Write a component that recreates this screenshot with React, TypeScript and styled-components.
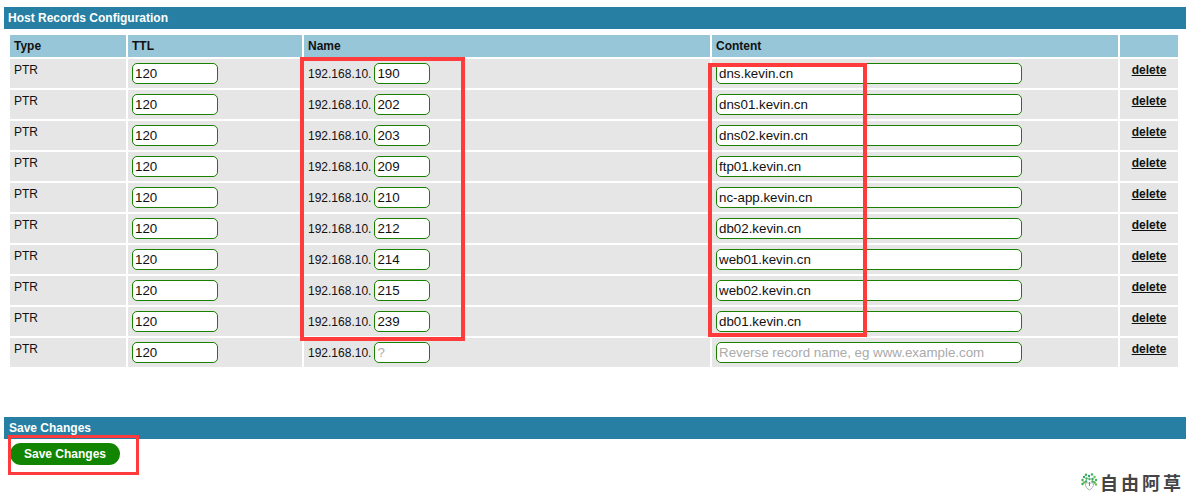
import styled, { createGlobalStyle } from "styled-components";

const GlobalStyle = createGlobalStyle`
  html, body {
    margin: 0;
    padding: 0;
    background: #fff;
    font-family: "Liberation Sans", Arial, sans-serif;
    font-size: 12px;
    color: #111;
  }
`;

const Page = styled.div`
  position: relative;
  width: 1186px;
  height: 494px;
  overflow: hidden;
  padding: 7px 0 0 4px;
  box-sizing: border-box;
`;

const SectionBar = styled.div<{ $indent: number }>`
  height: 22px;
  line-height: 22px;
  padding-left: ${(p) => p.$indent}px;
  background: #2780a3;
  color: #fff;
  font-weight: bold;
`;

const RecordsTable = styled.table`
  table-layout: fixed;
  width: 1172px;
  margin: 4px 0 48px 4px;
  border-collapse: separate;
  border-spacing: 2px;
`;

const HeadCell = styled.th`
  height: 22px;
  padding: 0 4px;
  background: #97c6d8;
  color: #111;
  font-weight: bold;
  text-align: left;
  vertical-align: middle;
`;

const Cell = styled.td`
  height: 29px;
  box-sizing: border-box;
  padding: 4px 4px 0;
  background: #e6e6e6;
  vertical-align: top;
  line-height: 14px;
`;

const FieldCell = styled(Cell)`
  white-space: nowrap;
`;

const TextInput = styled.input<{ $width: number }>`
  box-sizing: border-box;
  width: ${(p) => p.$width}px;
  height: 21px;
  margin: 0;
  padding: 1px 2px;
  border: 1px solid #1a8000;
  border-radius: 5px;
  background: #fff;
  color: #111;
  font-family: "Liberation Sans", Arial, sans-serif;
  font-size: 13.33px;
  outline: none;

  &::placeholder {
    color: #aaa;
    opacity: 1;
  }
`;

const Prefix = styled.span`
  margin-right: 3px;
`;

const DeleteCell = styled(Cell)`
  text-align: center;
`;

const DeleteLink = styled.a`
  color: #111;
  font-weight: bold;
  text-decoration: underline;
  cursor: pointer;
`;

const SaveButton = styled.button`
  display: block;
  width: 110px;
  height: 22px;
  margin: 4px 0 0 6px;
  padding: 0;
  border: 0;
  border-radius: 11px;
  background: #118400;
  color: #fff;
  font-family: "Liberation Sans", Arial, sans-serif;
  font-size: 12px;
  font-weight: bold;
`;

const RedBox = styled.div<{ $x: number; $y: number; $w: number; $h: number; $stroke: number }>`
  position: absolute;
  left: ${(p) => p.$x}px;
  top: ${(p) => p.$y}px;
  width: ${(p) => p.$w}px;
  height: ${(p) => p.$h}px;
  box-sizing: border-box;
  border: ${(p) => p.$stroke}px solid #ff3b3b;
  pointer-events: none;
`;

const Watermark = styled.div`
  position: absolute;
  right: 2px;
  bottom: 2px;
  display: flex;
  align-items: center;
  gap: 2px;
  color: #444;
  font-family: "Noto Sans CJK SC", sans-serif;
  font-size: 18px;
  font-weight: bold;
  letter-spacing: 3px;
  line-height: 20px;
`;

const records = [
  { ip: "190", host: "dns.kevin.cn" },
  { ip: "202", host: "dns01.kevin.cn" },
  { ip: "203", host: "dns02.kevin.cn" },
  { ip: "209", host: "ftp01.kevin.cn" },
  { ip: "210", host: "nc-app.kevin.cn" },
  { ip: "212", host: "db02.kevin.cn" },
  { ip: "214", host: "web01.kevin.cn" },
  { ip: "215", host: "web02.kevin.cn" },
  { ip: "239", host: "db01.kevin.cn" },
  { ip: "", host: "" },
];

const sprayDots = [
  [1.5, 7, "#3fae4f"], [3, 4, "#2fa36b"], [5, 1.8, "#3fae4f"], [8, 3, "#25a08a"],
  [11, 1.5, "#3fae4f"], [13.5, 4, "#6cc04a"], [15, 7, "#3fae4f"], [3, 9.5, "#6cc04a"],
  [5.5, 5.5, "#3fae4f"], [8.5, 6, "#3fae4f"], [11.5, 6, "#2fa36b"], [13.5, 9.5, "#3fae4f"],
  [1.5, 11, "#3fae4f"], [15, 11.5, "#6cc04a"], [5, 8.5, "#2fa36b"], [11.5, 8.5, "#3fae4f"],
] as const;

function PlantIcon() {
  return (
    <svg width="17" height="18" viewBox="0 0 17 18">
      {sprayDots.map(([cx, cy, fill], i) => (
        <circle key={i} cx={cx} cy={cy} r="1.2" fill={fill} />
      ))}
      <path
        d="M4.5 10.5c1.5-1 3-1 4 .5c1-1.500 2.500-1.500 4-.5c.5 3-2 5.500-4 6.500c-2-1-4.500-3.500-4-6.500z"
        fill="#fff"
        stroke="#a8b4b0"
        strokeWidth="1"
      />
      <path d="M8.500 9v4" stroke="#3fae4f" strokeWidth="1" fill="none" />
    </svg>
  );
}

export default function App() {
  return (
    <Page>
      <GlobalStyle />
      <SectionBar $indent={4}>Host Records Configuration</SectionBar>
      <RecordsTable>
        <colgroup>
          <col style={{ width: 116 }} />
          <col style={{ width: 174 }} />
          <col style={{ width: 406 }} />
          <col style={{ width: 406 }} />
          <col />
        </colgroup>
        <thead>
          <tr>
            <HeadCell>Type</HeadCell>
            <HeadCell>TTL</HeadCell>
            <HeadCell>Name</HeadCell>
            <HeadCell>Content</HeadCell>
            <HeadCell />
          </tr>
        </thead>
        <tbody>
          {records.map((r, i) => (
            <tr key={i}>
              <Cell>PTR</Cell>
              <FieldCell>
                <TextInput $width={86} defaultValue="120" />
              </FieldCell>
              <FieldCell>
                <Prefix>192.168.10.</Prefix>
                <TextInput $width={56} defaultValue={r.ip} placeholder="?" />
              </FieldCell>
              <FieldCell>
                <TextInput
                  $width={306}
                  defaultValue={r.host}
                  placeholder="Reverse record name, eg www.example.com"
                />
              </FieldCell>
              <DeleteCell>
                <DeleteLink>delete</DeleteLink>
              </DeleteCell>
            </tr>
          ))}
        </tbody>
      </RecordsTable>
      <SectionBar $indent={5}>Save Changes</SectionBar>
      <SaveButton>Save Changes</SaveButton>

      <RedBox $x={300} $y={57} $w={165} $h={284} $stroke={4} />
      <RedBox $x={708} $y={63} $w={159} $h={274} $stroke={4} />
      <RedBox $x={8} $y={435} $w={131} $h={40} $stroke={3} />

      <Watermark>
        <PlantIcon />
        <span>自由阿草</span>
      </Watermark>
    </Page>
  );
}
